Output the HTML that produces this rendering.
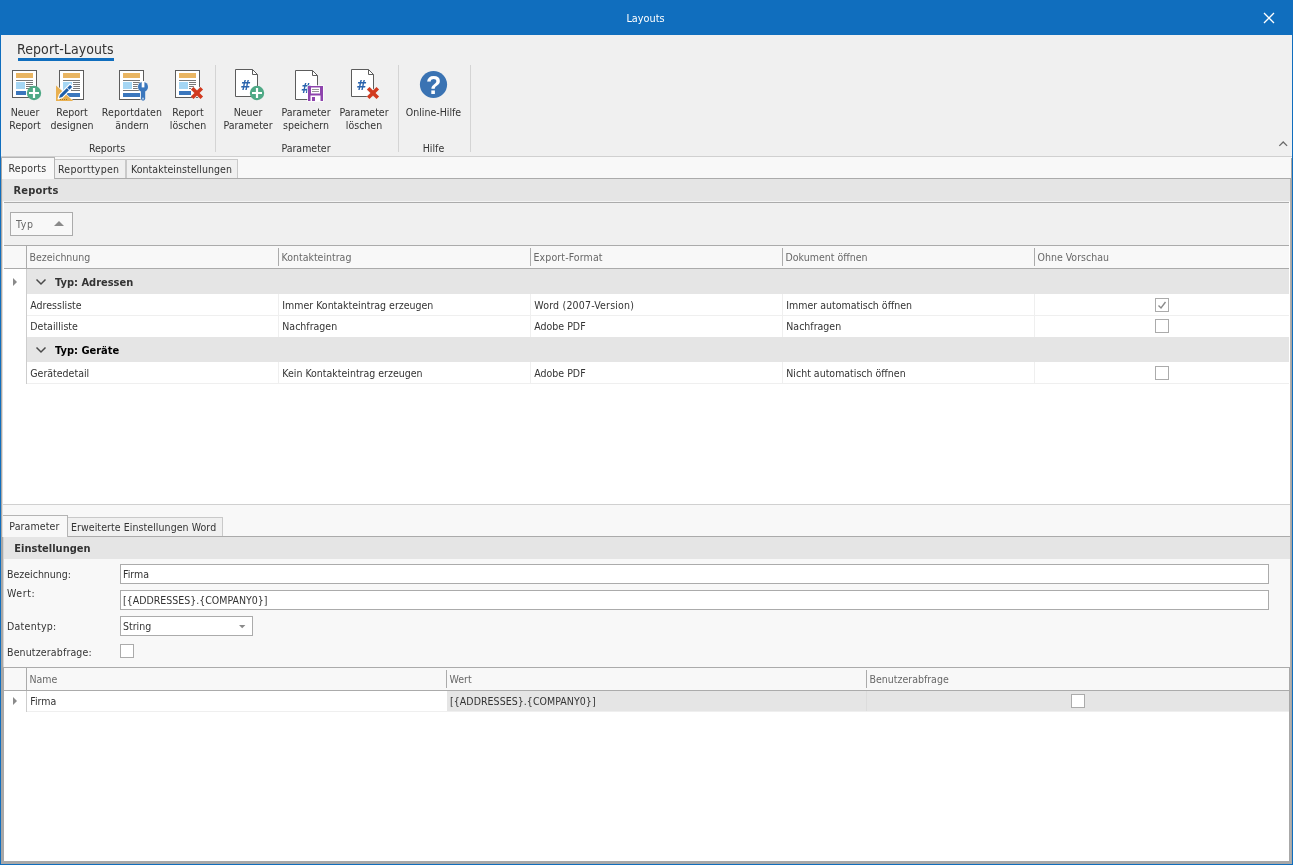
<!DOCTYPE html>
<html lang="de">
<head>
<meta charset="utf-8">
<title>Layouts</title>
<style>
html,body{margin:0;padding:0;}
body{width:1293px;height:865px;position:relative;overflow:hidden;background:#f8f8f8;
 font-family:"DejaVu Sans Condensed","Liberation Sans",sans-serif;font-size:10.5px;color:#333;line-height:13px;}
.a{position:absolute;}
.t{position:absolute;white-space:nowrap;line-height:13px;}
.b{font-weight:bold;font-size:11px;}
.h{color:#686868;}
.c{text-align:center;}
/* frame */
#title{left:0;top:0;width:1293px;height:35px;background:#106ebe;}
#ribbon{left:1px;top:35px;width:1291px;height:121px;background:#f0f0f0;}
.sep{position:absolute;top:65px;width:1px;height:87px;background:#d4d4d4;}
.lbl{position:absolute;top:106px;text-align:center;white-space:nowrap;line-height:13px;font-size:10.5px;transform:translateX(-50%);}
.cap{position:absolute;top:142px;text-align:center;white-space:nowrap;font-size:10.5px;transform:translateX(-50%);}
.ico{position:absolute;top:69px;width:32px;height:32px;}
.tab{position:absolute;box-sizing:border-box;border:1px solid #c9c9c9;border-bottom:none;background:#f0f0f0;}
.tab.on{background:#f8f8f8;border-color:#b4b4b4;}
.band{position:absolute;left:2px;width:1288px;height:22px;background:#e5e5e5;}
.hl{position:absolute;height:1px;background:#ababab;}
.vl{position:absolute;width:1px;background:#ababab;}
.cb{position:absolute;box-sizing:border-box;width:14px;height:14px;border:1px solid #ababab;background:#fff;}
.inp{position:absolute;box-sizing:border-box;border:1px solid #ababab;background:#fff;height:20px;}
</style>
</head>
<body>
<div id="root" style="position:absolute;left:0;top:0;width:1293px;height:865px;will-change:transform;">
<!-- title bar -->
<div class="a" id="title"></div>
<div class="t" style="left:0;width:1291px;top:12px;text-align:center;color:#fff;font-size:10.8px;">Layouts</div>
<svg class="a" style="left:1263px;top:12px" width="12" height="12" viewBox="0 0 12 12"><path d="M1 1 L11 11 M11 1 L1 11" stroke="#fff" stroke-width="1.3" fill="none"/></svg>

<!-- ribbon -->
<div class="a" id="ribbon"></div>
<div class="t" style="left:17px;top:40px;font-size:14px;line-height:18px;letter-spacing:0.08px;">Report-Layouts</div>
<div class="a" style="left:18px;top:58px;width:96px;height:3px;background:#106ebe;"></div>

<div class="sep" style="left:215px"></div>
<div class="sep" style="left:398px"></div>
<div class="sep" style="left:470px"></div>

<div class="lbl" style="left:25px">Neuer<br>Report</div>
<div class="lbl" style="left:72px">Report<br>designen</div>
<div class="lbl" style="left:132px"><span style="letter-spacing:0.18px">Reportdaten</span><br>ändern</div>
<div class="lbl" style="left:188px">Report<br>löschen</div>
<div class="lbl" style="left:248px">Neuer<br>Parameter</div>
<div class="lbl" style="left:306px">Parameter<br>speichern</div>
<div class="lbl" style="left:364px">Parameter<br>löschen</div>
<div class="lbl" style="left:433.5px">Online-Hilfe</div>
<div class="cap" style="left:107px">Reports</div>
<div class="cap" style="left:306px">Parameter</div>
<div class="cap" style="left:433.5px">Hilfe</div>

<!-- ICONS -->
<!--ICONS-START-->
<svg class="a" style="left:0;top:60px" width="480" height="46" viewBox="0 60 480 46" font-family='"DejaVu Sans","Liberation Sans",sans-serif'>
<!-- icon 1: Neuer Report -->
<g>
 <rect x="12.5" y="70.5" width="24" height="27" fill="#fff" stroke="#5c5c5c"/>
 <rect x="16" y="73" width="17" height="5" fill="#e9b562"/>
 <rect x="16" y="80" width="17" height="1" fill="#787878"/>
 <rect x="16" y="82" width="9" height="7" fill="#a5d6f4"/>
 <path d="M26 82.5h7M26 84.5h7M26 86.5h7M26 88.5h7" stroke="#787878" stroke-width="1"/>
 <rect x="16" y="91" width="10" height="4" fill="#3b77bd"/>
 <circle cx="34" cy="93" r="7.2" fill="#4fa986"/>
 <path d="M29 93h10M34 88v10" stroke="#fff" stroke-width="2.2"/>
</g>
<!-- icon 2: Report designen -->
<g>
 <rect x="59.500" y="70.5" width="24" height="29" fill="#fff" stroke="#5c5c5c"/>
 <rect x="63" y="73" width="17" height="5" fill="#e9b562"/>
 <rect x="63" y="80" width="17" height="1" fill="#787878"/>
 <rect x="63" y="82" width="9" height="8" fill="#a5d6f4"/>
 <path d="M73 82.5h7M73 84.5h7M73 86.5h7M73 88.5h7M71 90.500h9" stroke="#787878" stroke-width="1"/>
 <rect x="66" y="93" width="14" height="4" fill="#3b77bd"/>
 <path d="M55.400 83.800 L55.400 101.600 L74.600 101.600 Z" fill="#f0f0f0"/>
 <path d="M56 85.600 L56 101 L73.200 101 Z" fill="#e9b050"/>
 <path d="M60 99.500h1M62 99.500h1M64 99.500h1M66 99.500h1" stroke="#9a7432" stroke-width="1"/>
 <g transform="translate(58.100 98.900) rotate(-45)">
  <path d="M0 0 L4 -2.100 H19 V2.100 H4 Z" fill="#1f5faa" stroke="#fff" stroke-width="1.200" stroke-linejoin="round"/>
  <path d="M14.200 -2.100 V2.100" stroke="#fff" stroke-width="0.900"/>
 </g>
</g>
<!-- icon 3: Reportdaten aendern -->
<g>
 <rect x="119.500" y="70.5" width="24" height="29" fill="#fff" stroke="#5c5c5c"/>
 <rect x="123" y="73" width="17" height="5" fill="#e9b562"/>
 <rect x="123" y="80" width="17" height="1" fill="#787878"/>
 <rect x="123" y="82" width="9" height="7" fill="#a5d6f4"/>
 <path d="M133 82.500h7M133 84.500h5M133 86.500h5M133 88.500h5" stroke="#787878" stroke-width="1"/>
 <rect x="123" y="90" width="17" height="1" fill="#787878"/>
 <rect x="123" y="93" width="17" height="4" fill="#3b77bd"/>
 <circle cx="143" cy="86.900" r="5.600" fill="#f0f0f0"/>
 <rect x="140.400" y="89" width="5.300" height="12.300" rx="2.600" fill="#f0f0f0"/>
 <circle cx="143" cy="86.900" r="5" fill="#3b77bd"/>
 <rect x="140.900" y="89" width="4.300" height="11.700" rx="2.100" fill="#3b77bd"/>
 <rect x="141.700" y="81" width="2.700" height="6.400" fill="#fff"/>
 <rect x="142.300" y="97.700" width="1.400" height="1.800" fill="#d5e3f3"/>
</g>
<!-- icon 4: Report loeschen -->
<g>
 <rect x="175.500" y="70.5" width="24" height="27" fill="#fff" stroke="#5c5c5c"/>
 <rect x="179" y="73" width="17" height="5" fill="#e9b562"/>
 <rect x="179" y="80" width="17" height="1" fill="#787878"/>
 <rect x="179" y="82" width="9" height="7" fill="#a5d6f4"/>
 <path d="M189 82.500h7M189 84.500h7M189 86.500h5M189 88.500h2" stroke="#787878" stroke-width="1"/>
 <rect x="179" y="91" width="12" height="4" fill="#3b77bd"/>
 <path d="M192.200 88.200 L201.800 97.800 M201.800 88.200 L192.200 97.800" stroke="#f0f0f0" stroke-width="5"/>
 <path d="M192.200 88.200 L201.800 97.800 M201.800 88.200 L192.200 97.800" stroke="#d13a1f" stroke-width="3.600"/>
</g>
<!-- icon 5: Neuer Parameter -->
<g>
 <path d="M235.500 69.500 H252.500 L257.500 74.500 V96.500 H235.500 Z" fill="#fff" stroke="#5c5c5c"/>
 <path d="M252.500 69.500 V74.500 H257.500" fill="none" stroke="#5c5c5c"/>
 <text x="244.600" y="90" font-size="14.2" font-weight="bold" font-style="italic" fill="#2a63ad" text-anchor="middle" font-family='"DejaVu Sans Condensed","Liberation Sans",sans-serif'>#</text>
 <circle cx="257" cy="93" r="7.200" fill="#4fa986"/>
 <path d="M252 93h10M257 88v10" stroke="#fff" stroke-width="2.2"/>
</g>
<!-- icon 6: Parameter speichern -->
<g>
 <path d="M295.500 70.500 H312.500 L317.500 75.500 V99.500 H295.500 Z" fill="#fff" stroke="#5c5c5c"/>
 <path d="M312.500 70.500 V75.500 H317.500" fill="none" stroke="#5c5c5c"/>
 <text x="305.200" y="93" font-size="14.2" font-weight="bold" font-style="italic" fill="#2a63ad" text-anchor="middle" font-family='"DejaVu Sans Condensed","Liberation Sans",sans-serif'>#</text>
 <rect x="307.300" y="85.300" width="16.400" height="16.400" fill="#fff"/>
 <rect x="308" y="86" width="15" height="15" fill="#8e44ad"/>
 <rect x="311" y="87.500" width="9" height="6" fill="#fff"/>
 <path d="M312 89.500h7M312 91.500h7" stroke="#9a9a9a" stroke-width="1"/>
 <rect x="310.500" y="95.500" width="10" height="5.500" fill="#fff"/>
 <rect x="312" y="97" width="3" height="4" fill="#8e44ad"/>
</g>
<!-- icon 7: Parameter loeschen -->
<g>
 <path d="M351.500 69.500 H368.500 L373.500 74.500 V96.500 H351.500 Z" fill="#fff" stroke="#5c5c5c"/>
 <path d="M368.500 69.500 V74.500 H373.500" fill="none" stroke="#5c5c5c"/>
 <text x="360.600" y="90" font-size="14.2" font-weight="bold" font-style="italic" fill="#2a63ad" text-anchor="middle" font-family='"DejaVu Sans Condensed","Liberation Sans",sans-serif'>#</text>
 <path d="M368.200 88.200 L377.800 97.800 M377.800 88.200 L368.200 97.800" stroke="#f0f0f0" stroke-width="5"/>
 <path d="M368.200 88.200 L377.800 97.800 M377.800 88.200 L368.200 97.800" stroke="#d13a1f" stroke-width="3.600"/>
</g>
<!-- icon 8: Online-Hilfe -->
<g>
 <circle cx="433.500" cy="84.500" r="13.600" fill="#3a73b3"/>
 <text x="433.600" y="94" font-size="25" font-weight="bold" fill="#fff" text-anchor="middle" font-family='"Liberation Sans",sans-serif'>?</text>
</g>
</svg>
<!--ICONS-END-->

<svg class="a" style="left:1278px;top:140px" width="11" height="8" viewBox="0 0 11 8"><path d="M1.300 5.900 L5.200 2 L9.100 5.900" stroke="#6a6a6a" stroke-width="1.300" fill="none"/></svg>

<!-- ribbon bottom line -->
<div class="hl" style="left:1px;top:156px;width:1291px;background:#d0d0d0"></div>

<!-- top tabs -->
<div class="a" style="left:1px;top:157px;width:1291px;height:22px;background:#f8f8f8"></div>
<div class="hl" style="left:54px;top:178px;width:1238px;"></div>
<div class="tab" style="left:54px;top:159px;width:72px;height:19px;"></div>
<div class="tab" style="left:126px;top:159px;width:112px;height:19px;"></div>
<div class="tab on" style="left:1px;top:157px;width:54px;height:22px;"></div>
<div class="t" style="left:8.500px;top:162px;letter-spacing:0.25px">Reports</div>
<div class="t" style="left:58px;top:163px;letter-spacing:0.27px">Reporttypen</div>
<div class="t" style="left:131px;top:163px;letter-spacing:0.05px">Kontakteinstellungen</div>

<div class="band" style="top:179px;"></div>
<div class="t b" style="left:13.500px;top:184px;letter-spacing:0.2px">Reports</div>
<div class="a" style="left:2px;top:201px;width:1288px;height:303px;background:#fff"></div>
<div class="a" style="left:2px;top:201px;width:1288px;height:1px;background:#f4f4f4"></div>
<div class="a" style="left:4px;top:203px;width:1285px;height:42px;background:#f0f0f0"></div>
<div class="hl" style="left:4px;top:202px;width:1285px;"></div>
<!-- group panel box -->
<div class="a" style="left:10px;top:212px;width:63px;height:24px;box-sizing:border-box;border:1px solid #ababab;background:#f8f8f8"></div>
<div class="t h" style="left:16px;top:218px;letter-spacing:0.6px">Typ</div>
<svg class="a" style="left:53px;top:220px" width="12" height="7" viewBox="0 0 12 7"><path d="M1 6 L6 1 L11 6 Z" fill="#8a8a8a"/></svg>

<!-- grid 1 -->
<div class="a" style="left:4px;top:246px;width:1285px;height:22px;background:#f8f8f8"></div>
<div class="hl" style="left:4px;top:245px;width:1285px;"></div>
<div class="hl" style="left:4px;top:268px;width:1285px;"></div>
<div class="vl" style="left:26px;top:246px;height:22px;"></div>
<div class="vl" style="left:26px;top:269px;height:115px;background:#cdcdcd"></div>
<div class="vl" style="left:278px;top:248px;height:18px;"></div>
<div class="vl" style="left:530px;top:248px;height:18px;"></div>
<div class="vl" style="left:782px;top:248px;height:18px;"></div>
<div class="vl" style="left:1034px;top:248px;height:18px;"></div>
<div class="t h" style="left:29.500px;top:251px;">Bezeichnung</div>
<div class="t h" style="left:281.500px;top:251px;">Kontakteintrag</div>
<div class="t h" style="left:533.500px;top:251px;letter-spacing:0.12px">Export-Format</div>
<div class="t h" style="left:785.500px;top:251px;">Dokument öffnen</div>
<div class="t h" style="left:1037.500px;top:251px;">Ohne Vorschau</div>

<div class="a" style="left:27px;top:269px;width:1262px;height:25.400px;background:#e5e5e5"></div>
<div class="a" style="left:27px;top:337px;width:1262px;height:25px;background:#e5e5e5"></div>
<svg class="a" style="left:12px;top:277px" width="6" height="10" viewBox="0 0 6 10"><path d="M1 1 L5 5 L1 9 Z" fill="#8a8a8a"/></svg>
<svg class="a" style="left:35px;top:278px" width="12" height="8" viewBox="0 0 12 8"><path d="M1.500 1.500 L6 6 L10.500 1.500" stroke="#4a4a4a" stroke-width="1.500" fill="none"/></svg>
<svg class="a" style="left:35px;top:346px" width="12" height="8" viewBox="0 0 12 8"><path d="M1.500 1.500 L6 6 L10.500 1.500" stroke="#4a4a4a" stroke-width="1.500" fill="none"/></svg>
<div class="t b" style="left:55px;top:275.700px;">Typ: Adressen</div>
<div class="t b" style="left:55px;top:343.700px;color:#000">Typ: Geräte</div>

<div class="hl" style="left:27px;top:315px;width:1262px;background:#efefef"></div>
<div class="hl" style="left:27px;top:383px;width:1262px;background:#efefef"></div>
<div class="vl" style="left:278px;top:294px;height:43px;background:#efefef"></div>
<div class="vl" style="left:530px;top:294px;height:43px;background:#efefef"></div>
<div class="vl" style="left:782px;top:294px;height:43px;background:#efefef"></div>
<div class="vl" style="left:1034px;top:294px;height:43px;background:#efefef"></div>
<div class="vl" style="left:278px;top:362px;height:21px;background:#efefef"></div>
<div class="vl" style="left:530px;top:362px;height:21px;background:#efefef"></div>
<div class="vl" style="left:782px;top:362px;height:21px;background:#efefef"></div>
<div class="vl" style="left:1034px;top:362px;height:21px;background:#efefef"></div>

<div class="t" style="left:30.300px;top:299px;">Adressliste</div>
<div class="t" style="left:282.300px;top:299px;">Immer Kontakteintrag erzeugen</div>
<div class="t" style="left:534.300px;top:299px;letter-spacing:0.2px">Word (2007-Version)</div>
<div class="t" style="left:786.300px;top:299px;">Immer automatisch öffnen</div>
<div class="t" style="left:30.300px;top:320px;">Detailliste</div>
<div class="t" style="left:282.300px;top:320px;">Nachfragen</div>
<div class="t" style="left:534.300px;top:320px;">Adobe PDF</div>
<div class="t" style="left:786.300px;top:320px;">Nachfragen</div>
<div class="t" style="left:30.300px;top:367px;">Gerätedetail</div>
<div class="t" style="left:282.300px;top:367px;">Kein Kontakteintrag erzeugen</div>
<div class="t" style="left:534.300px;top:367px;">Adobe PDF</div>
<div class="t" style="left:786.300px;top:367px;">Nicht automatisch öffnen</div>

<div class="cb" style="left:1155px;top:298px;"></div>
<svg class="a" style="left:1157px;top:300px" width="10" height="10" viewBox="0 0 10 10"><path d="M1.5 5.5 L4 8 L8.5 2" stroke="#8a8a8a" stroke-width="1.4" fill="none"/></svg>
<div class="cb" style="left:1155px;top:319px;"></div>
<div class="cb" style="left:1155px;top:366px;"></div>

<!-- separator below grid 1 -->
<div class="hl" style="left:2px;top:504px;width:1288px;background:#d0d0d0"></div>

<!-- bottom tabs -->
<div class="hl" style="left:67px;top:536px;width:1224px;"></div>
<div class="tab" style="left:67px;top:517px;width:156px;height:19px;"></div>
<div class="tab on" style="left:2px;top:515px;width:66px;height:22px;"></div>
<div class="t" style="left:9.300px;top:520px;letter-spacing:0.12px">Parameter</div>
<div class="t" style="left:71px;top:521px;letter-spacing:0.07px">Erweiterte Einstellungen Word</div>

<div class="band" style="top:537px;"></div>
<div class="t b" style="left:14.300px;top:542px;">Einstellungen</div>

<div class="t" style="left:7px;top:568px;">Bezeichnung:</div>
<div class="t" style="left:7px;top:587px;letter-spacing:0.6px">Wert:</div>
<div class="t" style="left:7px;top:620px;letter-spacing:0.28px">Datentyp:</div>
<div class="t" style="left:7px;top:646px;letter-spacing:0.15px">Benutzerabfrage:</div>
<div class="inp" style="left:120px;top:564px;width:1149px;"></div>
<div class="inp" style="left:120px;top:590px;width:1149px;"></div>
<div class="inp" style="left:120px;top:616px;width:133px;"></div>
<div class="t" style="left:123px;top:568px;">Firma</div>
<div class="t" style="left:123px;top:594px;">[{ADDRESSES}.{COMPANY0}]</div>
<div class="t" style="left:123px;top:620px;">String</div>
<svg class="a" style="left:238px;top:624px" width="8" height="5" viewBox="0 0 8 5"><path d="M1 1 L7.400 1 L4.200 4.200 Z" fill="#8a8a8a"/></svg>
<div class="cb" style="left:120px;top:644px;"></div>

<!-- grid 2 -->
<div class="a" style="left:4px;top:668px;width:1285px;height:193px;background:#fff"></div>
<div class="a" style="left:4px;top:668px;width:1285px;height:22px;background:#f8f8f8"></div>
<div class="hl" style="left:4px;top:667px;width:1285px;"></div>
<div class="hl" style="left:4px;top:690px;width:1285px;"></div>
<div class="vl" style="left:26px;top:668px;height:22px;"></div>
<div class="vl" style="left:26px;top:691px;height:21px;background:#cdcdcd"></div>
<div class="vl" style="left:446px;top:670px;height:18px;"></div>
<div class="vl" style="left:866px;top:670px;height:18px;"></div>
<div class="t h" style="left:29.500px;top:673px;">Name</div>
<div class="t h" style="left:449.500px;top:673px;">Wert</div>
<div class="t h" style="left:869.500px;top:673px;">Benutzerabfrage</div>
<div class="a" style="left:446.500px;top:691px;width:842.500px;height:20px;background:#e5e5e5"></div>
<div class="vl" style="left:866px;top:691px;height:20px;background:#dcdcdc"></div>
<div class="hl" style="left:27px;top:711px;width:1262px;background:#efefef"></div>
<svg class="a" style="left:12px;top:696px" width="6" height="10" viewBox="0 0 6 10"><path d="M1 1 L5 5 L1 9 Z" fill="#8a8a8a"/></svg>
<div class="t" style="left:30.300px;top:695px;">Firma</div>
<div class="t" style="left:450px;top:695px;letter-spacing:0.05px">[{ADDRESSES}.{COMPANY0}]</div>
<div class="cb" style="left:1071px;top:694px;"></div>
<!-- outer gray frame -->
<div class="a" style="left:1px;top:158px;width:1px;height:706px;background:#aaa6a2"></div>
<div class="a" style="left:2px;top:179px;width:1px;height:358px;background:#dedede"></div>
<div class="a" style="left:2px;top:537px;width:1px;height:327px;background:#a8a8a8"></div>
<div class="a" style="left:3px;top:537px;width:1px;height:130px;background:#d4d4d4"></div>
<div class="a" style="left:3px;top:667px;width:1px;height:197px;background:#a8a8a8"></div>
<div class="a" style="left:1291px;top:158px;width:1px;height:706px;background:#aaa6a2"></div>
<div class="a" style="left:1290px;top:179px;width:1px;height:685px;background:#b0b0b0"></div>
<div class="a" style="left:1289px;top:667px;width:1px;height:197px;background:#a8a8a8"></div>
<div class="a" style="left:1px;top:861px;width:1291px;height:3px;background:#a8a8a8"></div>

<!-- window border -->
<div class="a" style="left:0;top:35px;width:1px;height:830px;background:#106ebe"></div>
<div class="a" style="left:1292px;top:35px;width:1px;height:830px;background:#106ebe"></div>
<div class="a" style="left:0;top:864px;width:1293px;height:1px;background:#106ebe"></div>

</div>
</body>
</html>
